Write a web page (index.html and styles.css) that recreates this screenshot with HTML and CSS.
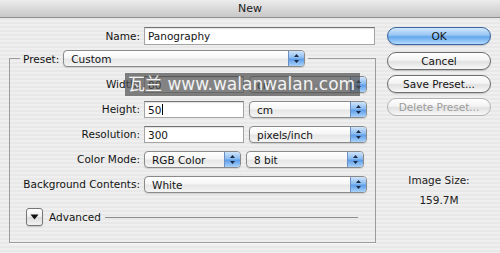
FILE: index.html
```html
<!DOCTYPE html>
<html>
<head>
<meta charset="utf-8">
<link rel="stylesheet" href="styles.css">
</head>
<body>
<div class="window">
  <div class="titlebar">New</div>
  <div class="content">
    <div class="form">
      <div class="name-row">
        <span class="lbl">Name:</span>
        <div class="input name-input">Panography</div>
      </div>
      <fieldset class="preset">
        <legend class="preset-legend">
          <span>Preset:</span>
          <div class="select preset-sel"><span class="sel-text">Custom</span><span class="arrows"><svg width="7" height="11" viewBox="0 0 7 11"><path d="M3.5 1 L6 4 L1 4 Z M1 7 L6 7 L3.5 10 Z" fill="#1c2a44"/></svg></span></div>
        </legend>
        <div class="rows">
          <span class="lbl">Width:</span>
          <div class="ctrls">
            <div class="input num">80</div>
            <div class="select unit"><span class="sel-text">cm</span><span class="arrows"><svg width="7" height="11" viewBox="0 0 7 11"><path d="M3.5 1 L6 4 L1 4 Z M1 7 L6 7 L3.5 10 Z" fill="#1c2a44"/></svg></span></div>
          </div>
          <span class="lbl">Height:</span>
          <div class="ctrls">
            <div class="input num">50<span class="caret"></span></div>
            <div class="select unit"><span class="sel-text">cm</span><span class="arrows"><svg width="7" height="11" viewBox="0 0 7 11"><path d="M3.5 1 L6 4 L1 4 Z M1 7 L6 7 L3.5 10 Z" fill="#1c2a44"/></svg></span></div>
          </div>
          <span class="lbl">Resolution:</span>
          <div class="ctrls">
            <div class="input num">300</div>
            <div class="select unit"><span class="sel-text">pixels/inch</span><span class="arrows"><svg width="7" height="11" viewBox="0 0 7 11"><path d="M3.5 1 L6 4 L1 4 Z M1 7 L6 7 L3.5 10 Z" fill="#1c2a44"/></svg></span></div>
          </div>
          <span class="lbl">Color Mode:</span>
          <div class="ctrls">
            <div class="select mode"><span class="sel-text">RGB Color</span><span class="arrows"><svg width="7" height="11" viewBox="0 0 7 11"><path d="M3.5 1 L6 4 L1 4 Z M1 7 L6 7 L3.5 10 Z" fill="#1c2a44"/></svg></span></div>
            <div class="select unit"><span class="sel-text">8 bit</span><span class="arrows"><svg width="7" height="11" viewBox="0 0 7 11"><path d="M3.5 1 L6 4 L1 4 Z M1 7 L6 7 L3.5 10 Z" fill="#1c2a44"/></svg></span></div>
          </div>
          <span class="lbl">Background Contents:</span>
          <div class="ctrls">
            <div class="select bg"><span class="sel-text">White</span><span class="arrows"><svg width="7" height="11" viewBox="0 0 7 11"><path d="M3.5 1 L6 4 L1 4 Z M1 7 L6 7 L3.5 10 Z" fill="#1c2a44"/></svg></span></div>
          </div>
        </div>
        <div class="advanced">
          <div class="disclosure"><svg width="9" height="6" viewBox="0 0 9 6"><path d="M0.5 0.5 L8.5 0.5 L4.5 5.5 Z" fill="#111"/></svg></div>
          <span class="adv-text">Advanced</span>
          <span class="adv-line"></span>
        </div>
      </fieldset>
    </div>
    <div class="side">
      <div class="btn default">OK</div>
      <div class="btn">Cancel</div>
      <div class="btn">Save Preset...</div>
      <div class="btn disabled">Delete Preset...</div>
      <div class="info">
        <div>Image Size:</div>
        <div>159.7M</div>
      </div>
    </div>
  </div>
  <div class="watermark">瓦兰 www.walanwalan.com</div>
</div>
</body>
</html>
```
FILE: styles.css
```css
body {
  margin: 0;
  width: 500px;
  height: 253px;
  overflow: hidden;
  font-family: "DejaVu Sans", sans-serif;
  font-size: 10.5px;
  color: #141414;
}

.window {
  position: relative;
  width: 500px;
  height: 253px;
  background: repeating-linear-gradient(to bottom, #efefef 0 2px, #e8e8e8 2px 4px);
}

.titlebar {
  height: 17px;
  line-height: 17px;
  text-align: center;
  font-size: 11px;
  color: #1a1a1a;
  border-bottom: 1px solid #8e8e8e;
  background: linear-gradient(#ececec, #d6d6d6 60%, #c8c8c8);
}

.content {
  display: flex;
}

.form {
  width: 380px;
  padding-top: 9px;
}

.name-row {
  display: flex;
  align-items: center;
  gap: 4px;
  height: 18px;
}

.lbl {
  text-align: right;
  white-space: nowrap;
}

.name-row .lbl {
  width: 140px;
}

.input {
  box-sizing: border-box;
  height: 17px;
  background: #fff;
  border: 1px solid #a4a4a4;
  border-top-color: #727272;
  box-shadow: inset 0 1px 1px rgba(0, 0, 0, 0.12);
  padding-left: 3px;
  display: flex;
  align-items: center;
  white-space: nowrap;
  flex: none;
}

.name-input {
  width: 231px;
  height: 18px;
}

.num {
  width: 100px;
}

.caret {
  display: inline-block;
  width: 1px;
  height: 11px;
  background: #000;
  margin-left: 1px;
}

.select {
  box-sizing: border-box;
  height: 17px;
  border: 1px solid #8a8a8a;
  border-radius: 4px;
  background: linear-gradient(#ffffff, #f6f6f6 45%, #e6e6e6 55%, #f4f4f4);
  box-shadow: 0 1px 1px rgba(0, 0, 0, 0.12);
  display: flex;
  align-items: stretch;
  overflow: hidden;
  flex: none;
}

.sel-text {
  flex: 1;
  padding-left: 7px;
  display: flex;
  align-items: center;
  white-space: nowrap;
}

.arrows {
  width: 15px;
  border-left: 1px solid #6b8fc2;
  background: linear-gradient(#cfe4fb, #8cbcf0 45%, #5e9de8 55%, #a9d3fb);
  display: flex;
  align-items: center;
  justify-content: center;
}

.preset {
  box-sizing: border-box;
  width: 367px;
  margin: 5px 0 0 9px;
  padding: 9px 0 16px 0;
  border: 1px solid #9c9c9c;
  box-shadow: 0 1px 0 rgba(255, 255, 255, 0.7);
}

.preset-legend {
  display: flex;
  align-items: center;
  gap: 4px;
  padding: 0 3px;
  margin-left: 10px;
}

.preset-sel {
  width: 242px;
}

.rows {
  display: grid;
  grid-template-columns: 130px 1fr;
  column-gap: 4px;
  row-gap: 8px;
  align-items: center;
}

.rows .lbl {
  height: 17px;
  line-height: 17px;
}

.ctrls {
  display: flex;
  gap: 5px;
}

.unit {
  width: 118px;
}

.mode {
  width: 97px;
}

.bg {
  width: 223px;
}

.advanced {
  display: flex;
  align-items: center;
  margin-top: 15px;
  padding-left: 16px;
  height: 18px;
}

.disclosure {
  box-sizing: border-box;
  width: 17px;
  height: 18px;
  border: 1px solid #777;
  border-radius: 3px;
  background: linear-gradient(#ffffff, #eeeeee 50%, #dcdcdc 51%, #f2f2f2);
  box-shadow: 0 1px 1px rgba(0, 0, 0, 0.15);
  display: flex;
  align-items: center;
  justify-content: center;
}

.adv-text {
  margin-left: 6px;
  white-space: nowrap;
}

.adv-line {
  width: 253px;
  height: 1px;
  margin-left: 4px;
  background: #8e8e8e;
}

.side {
  width: 104px;
  margin-left: 7px;
  padding-top: 9px;
  display: flex;
  flex-direction: column;
  gap: 5px;
}

.btn {
  box-sizing: border-box;
  height: 18px;
  line-height: 16px;
  text-align: center;
  border: 1px solid #6e6e6e;
  border-radius: 9px;
  background: linear-gradient(#ffffff, #f3f3f3 45%, #e1e1e1 55%, #f8f8f8);
  box-shadow: 0 1px 1px rgba(0, 0, 0, 0.18);
  white-space: nowrap;
}

.btn.default {
  margin-bottom: 2px;
  border-color: #3b64a0;
  background: linear-gradient(#d3e8fd, #97c6f3 45%, #63a6ec 55%, #b3dcff);
}

.btn.disabled {
  color: #9c9c9c;
  border-color: #b3b3b3;
  box-shadow: none;
}

.info {
  margin-top: 49px;
  text-align: center;
  line-height: 20px;
  color: #222;
}

.watermark {
  position: absolute;
  left: 125px;
  top: 73px;
  width: 235px;
  height: 23px;
  box-sizing: border-box;
  padding-left: 3px;
  background: rgba(78, 78, 78, 0.7);
  color: #f2f2f2;
  font-family: "DejaVu Sans", "Noto Sans CJK SC", sans-serif;
  font-size: 17px;
  line-height: 23px;
  white-space: nowrap;
  overflow: hidden;
}
```
